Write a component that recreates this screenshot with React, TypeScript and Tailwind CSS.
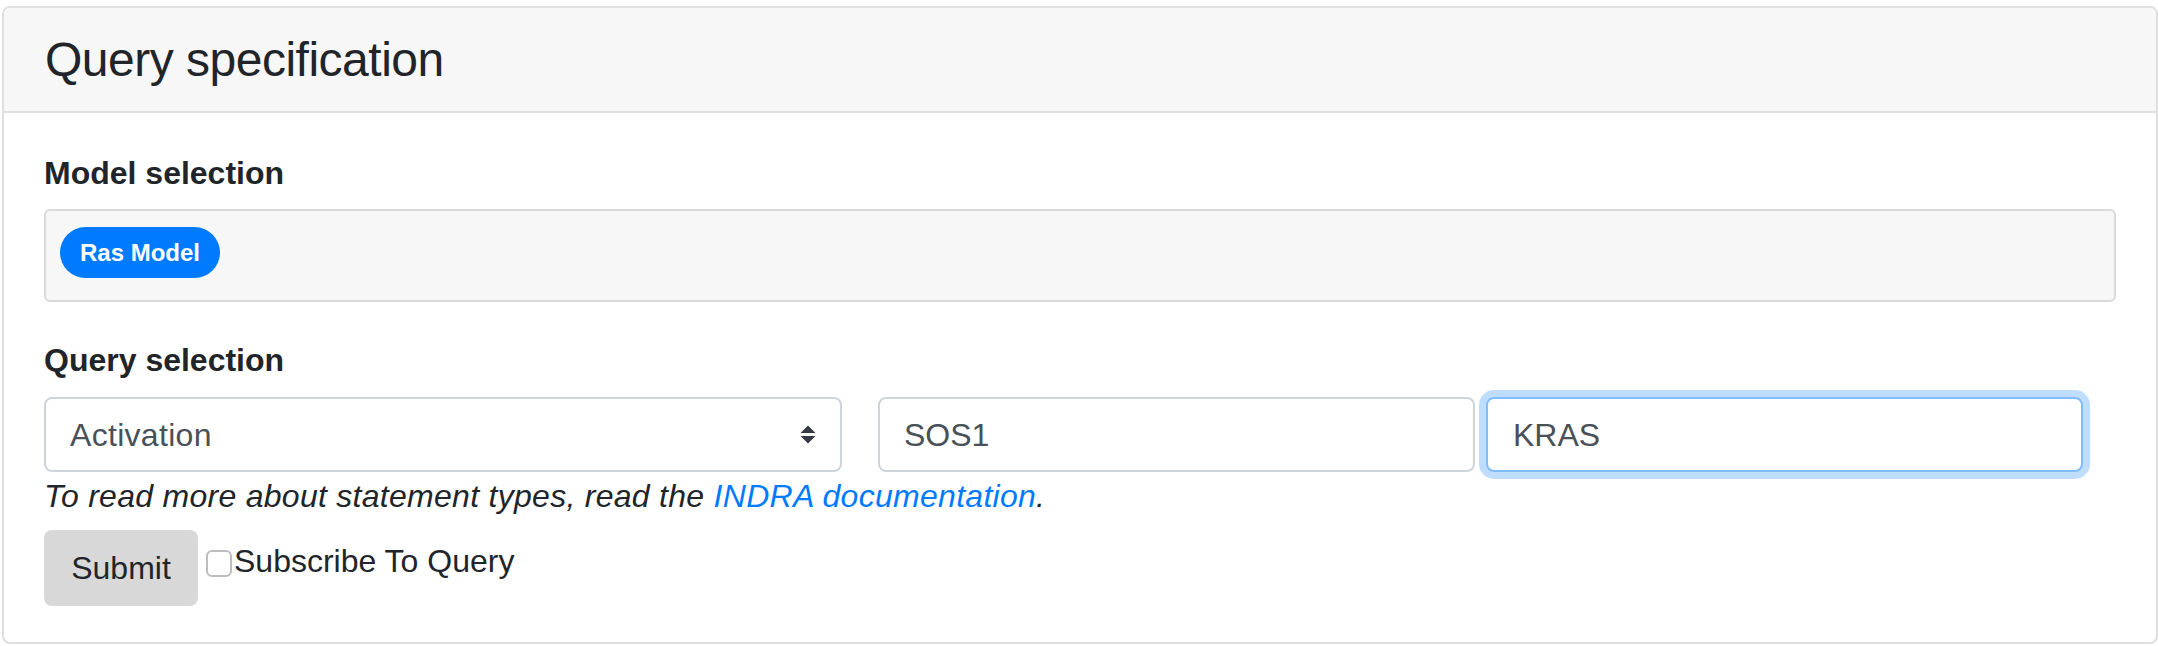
import React from 'react';

function SelectArrows() {
  return (
    <svg width="16" height="19" viewBox="0 0 16 19" fill="#343a40">
      <path d="M8 0.5 L15.5 8 H0.5 Z" strokeLinejoin="round" />
      <path d="M0.5 11 H15.5 L8 18.5 Z" strokeLinejoin="round" />
    </svg>
  );
}

export default function App() {
  return (
    <div className="w-[2158px] h-[646px] overflow-hidden bg-white font-['Liberation_Sans',Arial,sans-serif] text-[#212529]">
      <div className="ml-[2px] mt-[6px] w-[2156px] overflow-hidden rounded-[8px] border-2 border-[#dfdfdf]">
        {/* card header */}
        <div className="flex h-[105px] items-center border-b-2 border-[#dfdfdf] bg-[#f7f7f7] px-[41px]">
          <h4 className="text-[48px] font-normal leading-[1.2] tracking-[-0.5px]">Query specification</h4>
        </div>

        {/* card body */}
        <div className="px-[40px] pt-[40px] pb-[36px]">
          <label className="mb-[16px] block text-[32px] font-bold leading-[40px]">Model selection</label>
          <div className="h-[93px] rounded-[6px] border-2 border-[#d9d9d9] bg-[#f7f7f7] pl-[14px] pt-[16px]">
            <span className="inline-flex h-[51px] w-[160px] items-center justify-center rounded-full bg-[#007bff] text-[24px] font-bold text-white">
              Ras Model
            </span>
          </div>

          <label className="mt-[38px] mb-[17px] block text-[32px] font-bold leading-[40px]">Query selection</label>
          <div className="flex h-[75px] items-stretch">
            <div className="flex w-[798px] items-center justify-between rounded-[8px] border-2 border-[#ced4da] bg-white pl-[24px] pr-[24px] text-[32px] text-[#495057]">
              <span className="tracking-[0.3px]">Activation</span>
              <SelectArrows />
            </div>
            <input
              readOnly
              defaultValue="SOS1"
              className="ml-[36px] w-[597px] rounded-[8px] border-2 border-[#ced4da] bg-white px-[24px] font-['Liberation_Sans',Arial,sans-serif] text-[32px] text-[#495057] outline-none"
            />
            <input
              readOnly
              defaultValue="KRAS"
              className="ml-[11px] w-[597px] rounded-[8px] border-2 border-[#80bdff] bg-white px-[25px] font-['Liberation_Sans',Arial,sans-serif] text-[32px] text-[#495057] shadow-[0_0_0_7px_rgba(0,123,255,0.25)] outline-none"
            />
          </div>
          <p className="text-[32px] italic leading-[48px] tracking-[0.28px]">
            To read more about statement types, read the{' '}
            <a href="#" className="text-[#007bff]">
              INDRA documentation
            </a>
            .
          </p>

          <div className="mt-[10px] flex items-start">
            <button className="h-[76px] w-[154px] rounded-[8px] bg-[#d8d8d8] text-[32px] text-[#212529]">Submit</button>
            <label className="ml-[8px] mt-[7px] flex h-[48px] items-center text-[32px]">
              <input
                type="checkbox"
                className="mt-[4px] mr-[2px] h-[27px] w-[26px] appearance-none rounded-[6px] border-2 border-[#bdbdbd] bg-white"
              />
              Subscribe To Query
            </label>
          </div>
        </div>
      </div>
    </div>
  );
}
